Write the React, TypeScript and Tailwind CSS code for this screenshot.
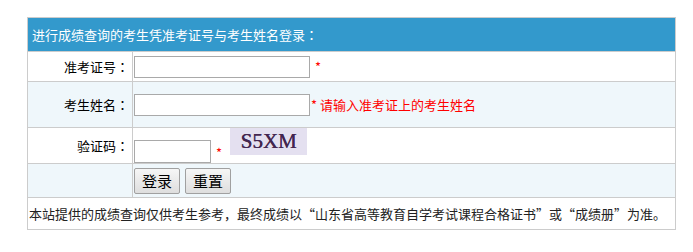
import React from "react";

const cjk = { fontFamily: '"Noto Sans CJK SC", "Noto Sans", sans-serif' };
const jp = { fontFamily: '"Noto Sans CJK JP", sans-serif' };

function Colon() {
  return <span style={jp}>：</span>;
}

export default function App() {
  return (
    <div className="min-h-screen bg-white pt-[17px] pl-[27px]" style={cjk}>
      <table className="w-[649px] border-collapse text-[13px] leading-none text-black">
        <tbody>
          {/* Header */}
          <tr className="h-[34px] bg-[#3399cc]">
            <td colSpan={2} className="border border-[#cccccc] pl-[4px] text-white">
              进行成绩查询的考生凭准考证号与考生姓名登录<Colon />
            </td>
          </tr>
          {/* 准考证号 */}
          <tr className="h-[30px] bg-white">
            <td className="w-[105px] border border-[#cccccc] pr-[3px] text-right">
              准考证号<Colon />
            </td>
            <td className="border border-[#cccccc] pl-[1px]">
              <div className="flex items-center">
                <input className="h-[22px] w-[176px] border border-[#a9a9a9] bg-white outline-none" />
                <span className="ml-[5px] text-[#ff0000]">*</span>
              </div>
            </td>
          </tr>
          {/* 考生姓名 */}
          <tr className="h-[46px] bg-[#eff7fb]">
            <td className="border border-[#cccccc] pr-[3px] text-right">
              考生姓名<Colon />
            </td>
            <td className="border border-[#cccccc] pl-[1px]">
              <div className="flex items-center">
                <input className="h-[22px] w-[176px] border border-[#a9a9a9] bg-white outline-none" />
                <span className="ml-[1px] text-[#ff0000]">* 请输入准考证上的考生姓名</span>
              </div>
            </td>
          </tr>
          {/* 验证码 */}
          <tr className="h-[36px] bg-white">
            <td className="border border-[#cccccc] pr-[3px] text-right">
              验证码<Colon />
            </td>
            <td className="border border-[#cccccc] pl-[1px]">
              <div className="flex h-[35px] items-start">
                <input className="mt-[12px] h-[23px] w-[77px] border border-[#a9a9a9] bg-white outline-none" />
                <span className="ml-[5px] mt-[18px] text-[#ff0000]">*</span>
                <div
                  className="ml-[8px] flex h-[27px] w-[77px] items-center justify-center bg-[#e4e0f0] text-[21px] text-[#43264f] [text-shadow:0.4px_0_0_#43264f]"
                  style={{ fontFamily: '"Liberation Serif", serif' }}
                >
                  S5XM
                </div>
              </div>
            </td>
          </tr>
          {/* Buttons */}
          <tr className="h-[34px] bg-[#eff7fb]">
            <td className="border border-[#cccccc]"></td>
            <td className="border border-[#cccccc] pl-[1px]">
              <div className="flex items-center gap-[5px]">
                <button className="h-[26px] w-[46px] rounded-[2px] border border-[#a0a0a0] bg-gradient-to-b from-[#f6f6f6] to-[#dedede] text-[15px] leading-none text-black">
                  登录
                </button>
                <button className="h-[26px] w-[46px] rounded-[2px] border border-[#a0a0a0] bg-gradient-to-b from-[#f6f6f6] to-[#dedede] text-[15px] leading-none text-black">
                  重置
                </button>
              </div>
            </td>
          </tr>
          {/* Footer note */}
          <tr className="h-[32px] bg-white">
            <td colSpan={2} className="border border-[#cccccc] pl-[1px] text-[#222]">
              本站提供的成绩查询仅供考生参考，最终成绩以“山东省高等教育自学考试课程合格证书”或“成绩册”为准。
            </td>
          </tr>
        </tbody>
      </table>
    </div>
  );
}
